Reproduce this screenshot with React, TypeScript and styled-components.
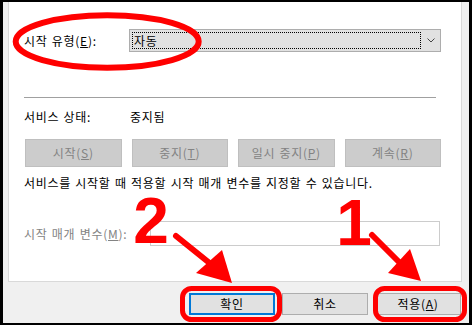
import React from "react";
import styled, { createGlobalStyle } from "styled-components";

const GlobalStyle = createGlobalStyle`
  html, body {
    margin: 0;
    padding: 0;
    background: #000;
  }
  body {
    font-family: "Noto Sans CJK KR", "Noto Sans", sans-serif;
    font-size: 12px;
    letter-spacing: 0.7px;
    word-spacing: 1px;
  }
`;

const Frame = styled.div`
  position: relative;
  width: 472px;
  height: 325px;
  box-sizing: border-box;
  padding: 2px 3px 2px 3px;
  background: #000;
  overflow: hidden;
`;

const Dialog = styled.div`
  height: 100%;
  background: #f0f0f0;
  display: flex;
  flex-direction: column;
`;

const Panel = styled.div`
  height: 280px;
  box-sizing: border-box;
  margin: 0 7px 0 5px;
  padding-left: 15px;
  background: #fff;
  border: 1px solid #d9d9d9;
  border-top: none;
  display: flex;
  flex-direction: column;
`;

const Row = styled.div<{ $top: number }>`
  display: flex;
  align-items: center;
  margin-top: ${(p) => p.$top}px;
`;

const Label = styled.span<{ $width: number; $disabled?: boolean }>`
  width: ${(p) => p.$width}px;
  flex-shrink: 0;
  line-height: 16px;
  color: ${(p) => (p.$disabled ? "#838383" : "#000")};
  white-space: nowrap;
`;

const Combo = styled.div`
  width: 312px;
  height: 23px;
  box-sizing: border-box;
  border: 1px solid #adadad;
  background: #e1e1e1;
  display: flex;
  align-items: center;
  padding-left: 2px;
`;

const FocusBox = styled.div`
  flex: 1;
  height: 17px;
  box-sizing: border-box;
  border: 1px dotted #000;
  padding-left: 1px;
  line-height: 15px;
  color: #000;
`;

const Arrow = styled.div`
  width: 19px;
  display: flex;
  justify-content: center;
  align-items: center;
`;

const Separator = styled.div`
  width: 412px;
  height: 1px;
  margin-top: 45px;
  background: #a0a0a0;
`;

const ButtonGrid = styled.div`
  display: grid;
  grid-template-columns: repeat(4, 1fr);
  column-gap: 10px;
  width: 416px;
  margin-top: 14px;
  margin-left: 1px;
`;

const SvcButton = styled.div`
  height: 28px;
  box-sizing: border-box;
  border: 1px solid #bfbfbf;
  background: #cccccc;
  color: #838383;
  display: flex;
  align-items: center;
  justify-content: center;
  line-height: 16px;
`;

const Description = styled.div`
  margin-top: 8px;
  line-height: 16px;
  color: #000;
  white-space: nowrap;
`;

const ParamInput = styled.div`
  width: 290px;
  height: 25px;
  box-sizing: border-box;
  border: 1px solid #cccccc;
  background: #fff;
`;

const Footer = styled.div`
  display: flex;
  justify-content: flex-end;
  gap: 7px;
  padding: 11px 8px 0 0;
`;

const DlgButton = styled.div<{ $default?: boolean }>`
  width: 86px;
  height: 22px;
  box-sizing: border-box;
  border: ${(p) => (p.$default ? "2px solid #0078d7" : "1px solid #adadad")};
  background: #e1e1e1;
  color: #000;
  display: flex;
  align-items: center;
  justify-content: center;
  line-height: 16px;
`;

const Overlay = styled.svg`
  position: absolute;
  left: 0;
  top: 0;
  pointer-events: none;
`;

const Num = styled.text`
  font-family: "Liberation Sans", Arial, sans-serif;
  font-weight: 700;
  font-size: 64px;
  letter-spacing: 0;
  fill: #ff0000;
`;

const services = [
  ["시작", "S"],
  ["중지", "T"],
  ["일시 중지", "P"],
  ["계속", "R"],
];

export default function App() {
  return (
    <>
      <GlobalStyle />
      <Frame>
        <Dialog>
          <Panel>
            <Row $top={27}>
              <Label $width={105}>
                시작 유형(<u>E</u>):
              </Label>
              <Combo>
                <FocusBox>자동</FocusBox>
                <Arrow>
                  <svg width="8" height="5" viewBox="0 0 8 5">
                    <path d="M0.5 0.5 L4 4 L7.5 0.5" fill="none" stroke="#444" strokeWidth="1" />
                  </svg>
                </Arrow>
              </Combo>
            </Row>
            <Separator />
            <Row $top={11}>
              <Label $width={106}>서비스 상태:</Label>
              <Label $width={100}>중지됨</Label>
            </Row>
            <ButtonGrid>
              {services.map(([name, key]) => (
                <SvcButton key={key}>
                  {name}(<u>{key}</u>)
                </SvcButton>
              ))}
            </ButtonGrid>
            <Description>
              서비스를 시작할 때 적용할 시작 매개 변수를 지정할 수 있습니다.
            </Description>
            <Row $top={30}>
              <Label $width={126} $disabled>
                시작 매개 변수(<u>M</u>):
              </Label>
              <ParamInput />
            </Row>
          </Panel>
          <Footer>
            <DlgButton $default>확인</DlgButton>
            <DlgButton>취소</DlgButton>
            <DlgButton>
              적용(<u>A</u>)
            </DlgButton>
          </Footer>
        </Dialog>
        <Overlay width="472" height="325" viewBox="0 0 472 325">
          <ellipse cx="107.2" cy="41.5" rx="91.5" ry="26.2" fill="none" stroke="#ff0000" strokeWidth="6" />
          <Num x="151" y="243" textAnchor="middle">2</Num>
          <Num x="354" y="245" textAnchor="middle">1</Num>
          <line x1="176" y1="236" x2="212" y2="265" stroke="#ff0000" strokeWidth="6" strokeLinecap="round" />
          <polygon points="196,273 222,250 232,283" fill="#ff0000" />
          <line x1="372" y1="235" x2="399" y2="262" stroke="#ff0000" strokeWidth="6" strokeLinecap="round" />
          <polygon points="388,273 410,249 421,281" fill="#ff0000" />
          <rect x="182.5" y="288.5" width="97" height="31" rx="9" fill="none" stroke="#ff0000" strokeWidth="5" />
          <rect x="375.5" y="288.5" width="89" height="31" rx="9" fill="none" stroke="#ff0000" strokeWidth="5" />
        </Overlay>
      </Frame>
    </>
  );
}
